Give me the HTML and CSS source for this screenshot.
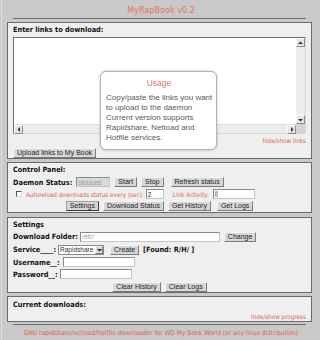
FILE: index.html
```html
<!DOCTYPE html>
<html>
<head>
<meta charset="utf-8">
<title>MyRapBook v0.2</title>
<link rel="stylesheet" href="styles.css">
</head>
<body>
<div class="page">
  <h1 class="title">MyRapBook v0.2</h1>
  <div class="rule"></div>

  <section class="panel panel-links">
    <div class="label">Enter links to download:</div>
    <div class="linkbox">
      <textarea class="links"></textarea>
      <div class="vbar">
        <span class="sbtn"><svg width="5" height="4" viewBox="0 0 5 4"><polygon points="0,3 2.5,0.5 5,3" fill="#333"/></svg></span>
        <span class="track"></span>
        <span class="sbtn"><svg width="5" height="4" viewBox="0 0 5 4"><polygon points="0,1 2.5,3.5 5,1" fill="#333"/></svg></span>
      </div>
      <div class="hbar">
        <span class="sbtn"><svg width="4" height="5" viewBox="0 0 4 5"><polygon points="3,0 0.5,2.5 3,5" fill="#333"/></svg></span>
        <span class="track"></span>
        <span class="sbtn"><svg width="4" height="5" viewBox="0 0 4 5"><polygon points="1,0 3.5,2.5 1,5" fill="#333"/></svg></span>
      </div>
      <div class="corner"></div>
    </div>
    <div class="toggle">hide/show links</div>
    <div class="row row-upload"><button class="btn">Upload links to My Book</button></div>
    <div class="tip">
      <div class="tip-title">Usage</div>
      <p class="tip-text">Copy/paste the links you want<br>to upload to the daemon<br>Current version supports<br>Rapidshare, Netload and<br>Hotfile services.</p>
    </div>
  </section>

  <section class="panel panel-control">
    <div class="label">Control Panel:</div>
    <div class="row row-12">
      <span class="bold">Daemon Status:</span>
      <input class="field status" type="text" value="stopped" disabled>
      <button class="btn">Start</button>
      <button class="btn">Stop</button>
      <button class="btn refresh">Refresh status</button>
    </div>
    <div class="row row-12">
      <input class="check" type="checkbox">
      <span class="red auto">Autoreload downloads status every (sec):</span>
      <input class="field sec" type="text" value="2">
      <span class="red activity-label">Link Activity:</span>
      <div class="field activity"><span class="activity-bar"></span></div>
    </div>
    <div class="row row-12 center">
      <button class="btn pressed">Settings</button>
      <button class="btn">Download Status</button>
      <button class="btn">Get History</button>
      <button class="btn logs">Get Logs</button>
    </div>
  </section>

  <section class="panel panel-settings">
    <div class="label label-12">Settings</div>
    <div class="row row-13">
      <span class="bold">Download Folder:</span>
      <input class="field folder" type="text" placeholder="/etc/">
      <button class="btn">Change</button>
    </div>
    <div class="row row-13">
      <span class="bold">Service____:</span>
      <span class="selectbox">
        <select class="select"><option>Rapidshare</option></select>
        <span class="sel-arrow"><svg width="5" height="4" viewBox="0 0 5 4"><polygon points="0,1 2.5,3.5 5,1" fill="#222"/></svg></span>
      </span>
      <button class="btn create">Create</button>
      <span class="bold">[Found: R/H/ ]</span>
    </div>
    <div class="row row-12">
      <span class="bold">Username__:</span>
      <input class="field user" type="text">
    </div>
    <div class="row row-12">
      <span class="bold">Password__:</span>
      <input class="field pass" type="password">
    </div>
    <div class="row row-12 center bottom">
      <button class="btn">Clear History</button>
      <button class="btn">Clear Logs</button>
    </div>
  </section>

  <section class="panel panel-downloads">
    <div class="label label-15">Current downloads:</div>
    <div class="toggle toggle-9">hide/show progress</div>
  </section>

  <div class="rule rule-foot"></div>
  <div class="footer">GNU rapidshare/netload/hotfile downloader for WD My Book World (or any linux distribution)</div>
</div>
</body>
</html>
```

FILE: styles.css
```css
* { box-sizing: border-box; }
html, body { margin: 0; padding: 0; }
body {
  background: #c9c9c9;
  font-family: "DejaVu Sans Condensed", "DejaVu Sans", sans-serif;
  color: #111;
  width: 320px;
  height: 340px;
  overflow: hidden;
}
.page {
  margin-left: 1px;
  border-left: 1px solid #dedede;
  height: 340px;
}
.title {
  margin: 0;
  height: 18px;
  line-height: 21px;
  font-size: 9px;
  font-weight: normal;
  color: #e4775d;
  text-align: center;
}
.rule {
  height: 1px;
  background: #6d6d6d;
  margin: 0 14px 0 11px;
}
.panel {
  margin: 3px 0 0 5px;
  width: 305px;
  border: 1px solid #6a6a6a;
  background: #efefef;
  padding: 0 5px;
}
.panel-links { position: relative; }
.panel-settings { margin-top: 4px; }

.label {
  font-weight: bold;
  font-size: 7.3px;
  height: 14px;
  line-height: 13px;
}
.label-12 { height: 12px; line-height: 13px; }
.label-15 { height: 15px; line-height: 16px; }
.panel-control .label { height: 13px; line-height: 14px; }
.bold { font-weight: bold; font-size: 7.3px; white-space: nowrap; }

.linkbox {
  height: 97px;
  display: grid;
  grid-template-columns: 1fr 9px;
  grid-template-rows: 1fr 9px;
  border: 1px solid;
  border-color: #6e6e6e #d8d8d8 #d8d8d8 #6e6e6e;
  background: #fff;
}
.links {
  border: 0;
  margin: 0;
  padding: 0;
  resize: none;
  outline: none;
  background: #fff;
  width: 100%;
  height: 100%;
  overflow: hidden;
}
.vbar { display: flex; flex-direction: column; background: #ededed; }
.hbar { display: flex; background: #ededed; border-top: 1px solid #e0e0e0; }
.track { flex: 1; }
.sbtn {
  width: 9px;
  height: 9px;
  flex: none;
  background: #e4e4e4;
  border: 1px solid;
  border-color: #fafafa #8c8c8c #8c8c8c #fafafa;
  display: flex;
  align-items: center;
  justify-content: center;
}
.corner { background: #d4d4d4; }

.toggle {
  height: 13px;
  line-height: 13px;
  text-align: right;
  font-size: 6.3px;
  color: #e2604c;
}
.toggle-9 { height: 9px; line-height: 9px; }
.red { color: #e2604c; font-size: 6.3px; white-space: nowrap; }

.row { display: flex; align-items: center; gap: 4px; }
.row-upload { height: 11px; }
.row-12 { height: 12px; }
.row-13 { height: 13px; }
.center { justify-content: center; }
.bottom { align-items: flex-end; }

.btn {
  height: 10px;
  margin: 0;
  padding: 0 3px;
  font-family: "Liberation Sans", Arial, sans-serif;
  font-size: 7px;
  line-height: 8px;
  color: #222;
  background: #d7d7d7;
  border: 1px solid;
  border-color: #f6f6f6 #7b7b7b #7b7b7b #f6f6f6;
  white-space: nowrap;
}
.btn.pressed { border-color: #a0a0a0 #3a3a3a #3a3a3a #a0a0a0; }
.refresh { margin-left: 3px; }
.logs { margin-left: 2px; }
.create { margin-left: 2px; }

.field {
  height: 10px;
  margin: 0;
  padding: 0 1px;
  border: 1px solid;
  border-color: #8a8a8a #c4c4c4 #c4c4c4 #8a8a8a;
  background: #fff;
  font-family: "Liberation Sans", Arial, sans-serif;
  font-size: 6.5px;
  color: #222;
}
.field::placeholder { color: #9a9a9a; font-style: italic; }
.status { width: 34px; background: #d9d9d9; color: #9a9a9a; }
.sec { width: 18px; margin-left: -2px; }
.activity { width: 42px; padding: 1px; display: flex; }
.activity-bar { width: 3px; background: #c9c9c9; border: 1px solid #b0b0b0; }
.activity-label { margin-left: 5px; }
.folder { width: 140px; margin-left: -2px; }
.user { width: 72px; margin-left: -1px; }
.pass { width: 72px; margin-left: -2px; }

.check {
  appearance: none;
  -webkit-appearance: none;
  width: 6px;
  height: 6px;
  margin: 0 0 0 3px;
  border: 1px solid;
  border-color: #555 #dcdcdc #dcdcdc #555;
  background: #fff;
}

.selectbox {
  display: inline-flex;
  width: 46px;
  height: 10px;
  border: 1px solid #8a8a8a;
  background: #fff;
  margin-left: -2px;
}
.select {
  appearance: none;
  -webkit-appearance: none;
  flex: 1;
  width: 0;
  border: 0;
  margin: 0;
  padding: 0 1px;
  background: #fff;
  font-family: "Liberation Sans", Arial, sans-serif;
  font-size: 6.5px;
  height: 8px;
  line-height: 8px;
  color: #333;
}
.sel-arrow {
  width: 8px;
  height: 8px;
  background: #dcdcdc;
  border: 1px solid;
  border-color: #f6f6f6 #7b7b7b #7b7b7b #f6f6f6;
  display: flex;
  align-items: center;
  justify-content: center;
}

.tip {
  position: absolute;
  left: 92px;
  top: 48px;
  width: 117px;
  height: 79px;
  background: #fff;
  border: 1px solid #b4b4b4;
  border-radius: 6px;
  box-shadow: 0 0 3px rgba(0, 0, 0, 0.25);
  font-family: "Liberation Sans", Arial, sans-serif;
  padding: 6px 4px 0 5px;
}
.tip-title {
  text-align: center;
  font-size: 8.5px;
  line-height: 10px;
  color: #e0785f;
}
.tip-text {
  margin: 5px 0 0;
  font-size: 8px;
  line-height: 10px;
  color: #5a5a5a;
  white-space: nowrap;
}

.rule-foot { margin-top: 2px; }
.footer {
  height: 15px;
  line-height: 17px;
  font-size: 6.6px;
  color: #e2604c;
  text-align: center;
  white-space: nowrap;
}
```
